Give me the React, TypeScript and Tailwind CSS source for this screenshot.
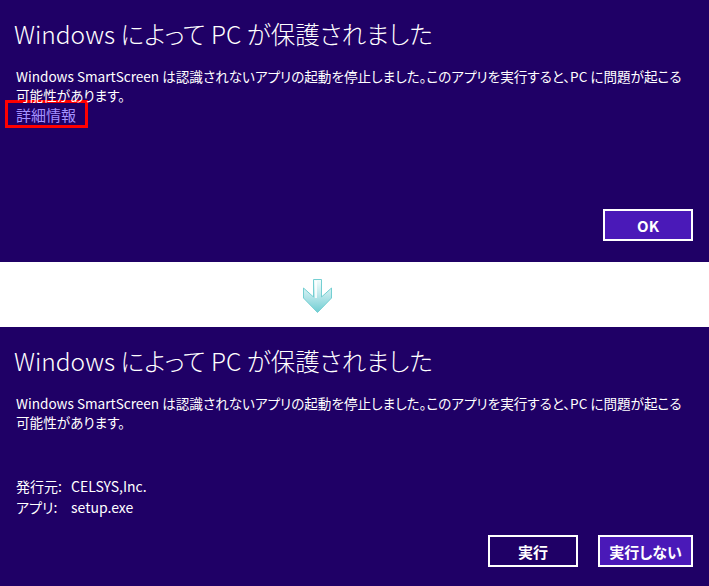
import React from "react";

type DialogButtonProps = {
  label: string;
  width: string;
  primary?: boolean;
};

const DialogButton = ({ label, width, primary }: DialogButtonProps): JSX.Element => {
  return (
    <button
      className={`${width} h-[32px] border-2 border-white text-[15px] font-bold text-white leading-none ${
        primary ? "bg-[#4a19b8]" : "bg-[#1f0066]"
      }`}
    >
      {label}
    </button>
  );
};

const Title = (): JSX.Element => (
  <h1 className="text-[24.5px] leading-[32px] font-light text-white">
    Windows によって PC が保護されました
  </h1>
);

const Message = (): JSX.Element => (
  <p className="mt-[17px] text-[13.6px] leading-[19px] text-white whitespace-nowrap">
    Windows SmartScreen は認識されないアプリの起動を停止しました。このアプリを実行すると、PC に問題が起こる
    <br />
    可能性があります。
  </p>
);

const DownArrow = (): JSX.Element => (
  <svg width="29" height="35" viewBox="0 0 29 35">
    <defs>
      <linearGradient id="arrowFill" x1="0" y1="0" x2="0" y2="1">
        <stop offset="0" stopColor="#f4fdfd" />
        <stop offset="0.45" stopColor="#bfe9ec" />
        <stop offset="1" stopColor="#6fcdd2" />
      </linearGradient>
    </defs>
    <polygon
      points="10.5,0.5 18.5,0.5 18.5,18 28.5,9 28.5,19 14.5,33.5 0.5,19 0.5,9 10.5,18"
      fill="url(#arrowFill)"
      stroke="#74cfd2"
      strokeWidth="1"
      strokeLinejoin="miter"
    />
    <rect x="12" y="2" width="2" height="17" fill="#ffffff" opacity="0.8" />
  </svg>
);

export default function App(): JSX.Element {
  const font = "font-['Noto_Sans_CJK_JP',sans-serif] [font-feature-settings:'palt']";
  return (
    <div className={`w-[709px] h-[586px] bg-white ${font}`}>
      {/* before */}
      <section className="h-[262px] bg-[#1f0066] flex flex-col pt-[18px] pl-[14px] pr-[16px] pb-[21px]">
        <Title />
        <div className="pl-[2px]">
          <Message />
          <div className="-ml-[11px] mt-[-5px] w-[83px] h-[28px] border-[3px] border-[#ff0000] flex items-center pl-[8px]">
            <span className="text-[15px] leading-none text-[#a593ff]">詳細情報</span>
          </div>
        </div>
        <div className="mt-auto flex justify-end">
          <DialogButton label="OK" width="w-[90px]" primary />
        </div>
      </section>

      {/* arrow */}
      <div className="h-[65px] pt-[17px] pl-[303px]">
        <DownArrow />
      </div>

      {/* after */}
      <section className="h-[259px] bg-[#1f0066] flex flex-col pt-[18px] pl-[14px] pr-[16px] pb-[19px]">
        <Title />
        <div className="pl-[2px]">
          <Message />
          <div className="mt-[44px] grid grid-cols-[55px_1fr] text-[14px] leading-[21px] text-white">
            <span>発行元:</span>
            <span>CELSYS,Inc.</span>
            <span>アプリ:</span>
            <span>setup.exe</span>
          </div>
        </div>
        <div className="mt-auto flex justify-end gap-[20px]">
          <DialogButton label="実行" width="w-[90px]" />
          <DialogButton label="実行しない" width="w-[95px]" primary />
        </div>
      </section>
    </div>
  );
}
